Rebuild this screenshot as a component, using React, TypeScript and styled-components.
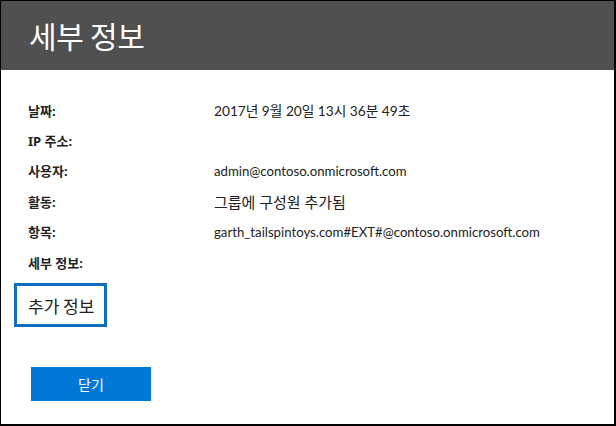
import React from "react";
import styled, { createGlobalStyle } from "styled-components";

const Global = createGlobalStyle`
  html, body { margin: 0; padding: 0; background: #ffffff; }
  * { box-sizing: border-box; }
`;

const Dialog = styled.div`
  width: 616px;
  height: 426px;
  border-top: 1px solid #000;
  border-left: 1px solid #000;
  border-right: 2px solid #000;
  border-bottom: 2px solid #000;
  background: #fff;
  display: flex;
  flex-direction: column;
  font-family: "Noto Sans", "Noto Sans CJK KR", sans-serif;
  color: #1a1a1a;
`;

const Header = styled.header`
  height: 69px;
  background: #505050;
  display: flex;
  align-items: center;
  padding-left: 28px;
  padding-bottom: 2px;
`;

const Title = styled.h1`
  margin: 0;
  font-family: "Noto Sans CJK KR", sans-serif;
  font-weight: 400;
  font-size: 30px;
  color: #ffffff;
  letter-spacing: -0.3px;
`;

const Body = styled.div`
  padding: 25px 0 0 27px;
  display: flex;
  flex-direction: column;
`;

const Grid = styled.dl`
  margin: 0;
  display: grid;
  grid-template-columns: 186px 1fr;
  grid-auto-rows: 30.4px;
  align-items: center;
`;

const Label = styled.dt`
  margin: 0;
  font-size: 13px;
  font-weight: 700;
  color: #222;
`;

const Value = styled.dd<{ $size: number }>`
  margin: 0;
  font-family: "Lato", "Noto Sans CJK KR", sans-serif;
  font-size: ${(p) => p.$size}px;
  color: #222;
`;

const MoreBox = styled.div`
  margin: 6px 0 0 -14px;
  width: 93px;
  height: 44px;
  border: 3px solid #106ebe;
  display: flex;
  align-items: center;
  padding-left: 11px;
  font-family: "Noto Sans CJK KR", sans-serif;
  font-size: 17px;
  color: #222;
`;

const CloseButton = styled.button`
  margin: 40px 0 0 3px;
  width: 120px;
  height: 34px;
  border: none;
  background: #0078d7;
  color: #fff;
  font-family: "Noto Sans CJK KR", sans-serif;
  font-size: 14px;
  padding: 0;
  cursor: pointer;
`;

const rows: { label: string; value: string; size: number }[] = [
  { label: "날짜:", value: "2017년 9월 20일 13시 36분 49초", size: 13.7 },
  { label: "IP 주소:", value: "", size: 13 },
  { label: "사용자:", value: "admin@contoso.onmicrosoft.com", size: 13.2 },
  { label: "활동:", value: "그룹에 구성원 추가됨", size: 15 },
  { label: "항목:", value: "garth_tailspintoys.com#EXT#@contoso.onmicrosoft.com", size: 13.2 },
  { label: "세부 정보:", value: "", size: 13 },
];

export default function App() {
  return (
    <>
      <Global />
      <Dialog>
        <Header>
          <Title>세부 정보</Title>
        </Header>
        <Body>
          <Grid>
            {rows.map((r) => (
              <React.Fragment key={r.label}>
                <Label>{r.label}</Label>
                <Value $size={r.size}>{r.value}</Value>
              </React.Fragment>
            ))}
          </Grid>
          <MoreBox>추가 정보</MoreBox>
          <CloseButton>닫기</CloseButton>
        </Body>
      </Dialog>
    </>
  );
}
